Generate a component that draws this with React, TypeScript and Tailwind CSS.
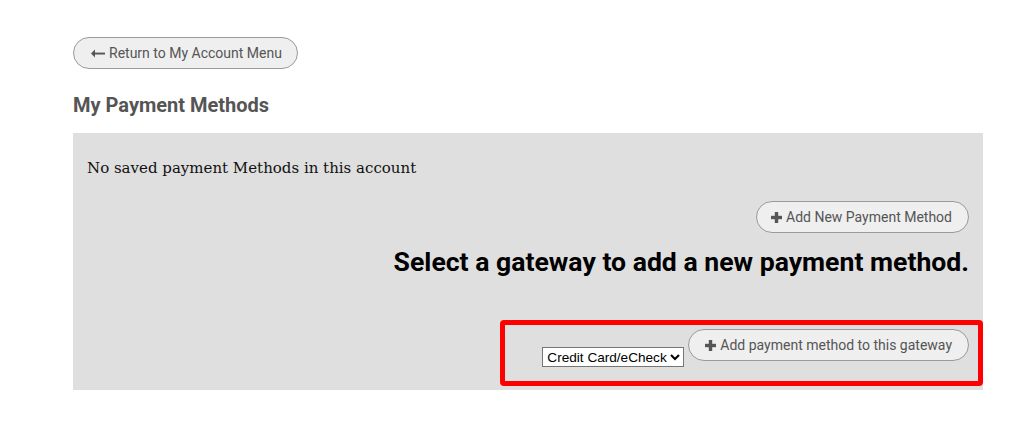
import React from "react";

function PlusIcon() {
    return (
        <svg width="11" height="11" viewBox="0 0 11 11" className="mr-[4px] shrink-0">
            <rect x="3.8" y="0" width="3.4" height="11" fill="#555" />
            <rect x="0" y="3.8" width="11" height="3.4" fill="#555" />
        </svg>
    );
}

function ArrowIcon() {
    return (
        <svg width="14" height="9" viewBox="0 0 14 9" className="mr-[4px] shrink-0">
            <path d="M4 0.5 L0 4.5 L4 8.5 Z" fill="#555" />
            <rect x="3" y="3.6" width="11" height="1.9" fill="#555" />
        </svg>
    );
}

function PillButton(props: { children: React.ReactNode; className?: string }) {
    return (
        <button
            className={
                "flex items-center h-[32px] rounded-full border border-[#9a9a9a] bg-[#efefef] text-[14px] text-[#555] font-['Roboto',sans-serif] " +
                (props.className ?? "")
            }
        >
            {props.children}
        </button>
    );
}

export default function App() {
    return (
        <div className="w-[1031px] h-[431px] bg-white font-['Roboto',sans-serif]">
            <div className="pl-[73px] pt-[37px] w-[983px]">
                <PillButton className="pl-[17px] pr-[15px]">
                    <ArrowIcon />
                    Return to My Account Menu
                </PillButton>

                <h2 className="mt-[23px] text-[20px] leading-[26px] font-bold text-[#555]">
                    My Payment Methods
                </h2>

                <div className="mt-[15px] bg-[#dfdfdf] h-[257px] px-[14px] pt-[23px] relative">
                    <p className="font-['DejaVu_Serif',serif] text-[15px] leading-[24px] text-[#111]">
                        No saved payment Methods in this account
                    </p>

                    <div className="flex justify-end mt-[21px]">
                        <PillButton className="pl-[14px] pr-[16px]">
                            <PlusIcon />
                            Add New Payment Method
                        </PillButton>
                    </div>

                    <h1 className="mt-[12px] text-right text-[26.6px] leading-[34px] font-bold text-black">
                        Select a gateway to add a new payment method.
                    </h1>

                    <div className="flex justify-end items-start mt-[50px]">
                        <select className="mt-[18px] mr-[4px] h-[20px] border border-[#767676] bg-white text-black text-[13.6px] font-['Liberation_Sans',sans-serif]">
                            <option>Credit Card/eCheck</option>
                        </select>
                        <PillButton className="pl-[16px] pr-[16px]">
                            <PlusIcon />
                            Add payment method to this gateway
                        </PillButton>
                    </div>

                    {/* annotation box */}
                    <div className="absolute left-[427px] right-0 top-[187px] h-[66px] border-[5px] border-[#ff0000] rounded-[4px] pointer-events-none" />
                </div>
            </div>
        </div>
    );
}
